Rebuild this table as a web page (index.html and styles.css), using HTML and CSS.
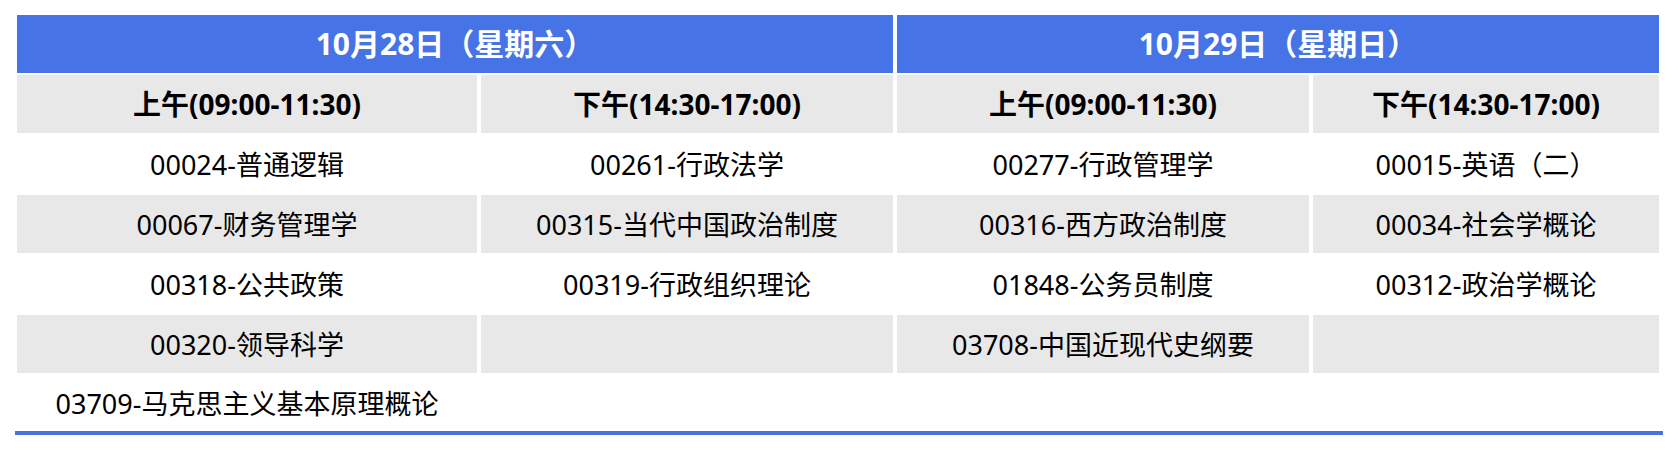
FILE: index.html
```html
<!DOCTYPE html>
<html lang="zh-CN">
<head>
<meta charset="utf-8">
<title>考试安排</title>
<link rel="stylesheet" href="styles.css">
</head>
<body>
<div class="schedule">
  <div class="grid">
    <div class="cell day span2">10月28日（星期六）</div>
    <div class="cell day span2">10月29日（星期日）</div>

    <div class="cell sub">上午(09:00-11:30)</div>
    <div class="cell sub">下午(14:30-17:00)</div>
    <div class="cell sub">上午(09:00-11:30)</div>
    <div class="cell sub">下午(14:30-17:00)</div>

    <div class="cell">00024-普通逻辑</div>
    <div class="cell">00261-行政法学</div>
    <div class="cell">00277-行政管理学</div>
    <div class="cell">00015-英语（二）</div>

    <div class="cell alt">00067-财务管理学</div>
    <div class="cell alt">00315-当代中国政治制度</div>
    <div class="cell alt">00316-西方政治制度</div>
    <div class="cell alt">00034-社会学概论</div>

    <div class="cell">00318-公共政策</div>
    <div class="cell">00319-行政组织理论</div>
    <div class="cell">01848-公务员制度</div>
    <div class="cell">00312-政治学概论</div>

    <div class="cell alt">00320-领导科学</div>
    <div class="cell alt"></div>
    <div class="cell alt">03708-中国近现代史纲要</div>
    <div class="cell alt"></div>

    <div class="cell">03709-马克思主义基本原理概论</div>
    <div class="cell"></div>
    <div class="cell"></div>
    <div class="cell"></div>
  </div>
</div>
</body>
</html>
```

FILE: styles.css
```css
html, body {
  margin: 0;
  padding: 0;
  background: #ffffff;
}

body {
  font-family: "Noto Sans", "Noto Sans CJK SC", sans-serif;
  font-size: 27px;
  color: #000000;
}

.schedule {
  margin: 15px 0 0 15px;
  width: 1648px;
  border-bottom: 4px solid #4a72db;
}

.grid {
  display: grid;
  grid-template-columns: 460px 412px 412px 346px;
  grid-template-rows: repeat(6, 58px) 56px;
  column-gap: 4px;
  row-gap: 2px;
  padding: 0 4px 0 2px;
}

.cell {
  display: flex;
  align-items: center;
  justify-content: center;
  white-space: nowrap;
  line-height: 1;
}

.span2 {
  grid-column: span 2;
}

.day {
  background: #4673e6;
  color: #ffffff;
  font-weight: 700;
  font-size: 30px;
}

.sub {
  background: #e8e8e8;
  font-weight: 700;
  font-size: 28px;
}

.alt {
  background: #e8e8e8;
}
```
